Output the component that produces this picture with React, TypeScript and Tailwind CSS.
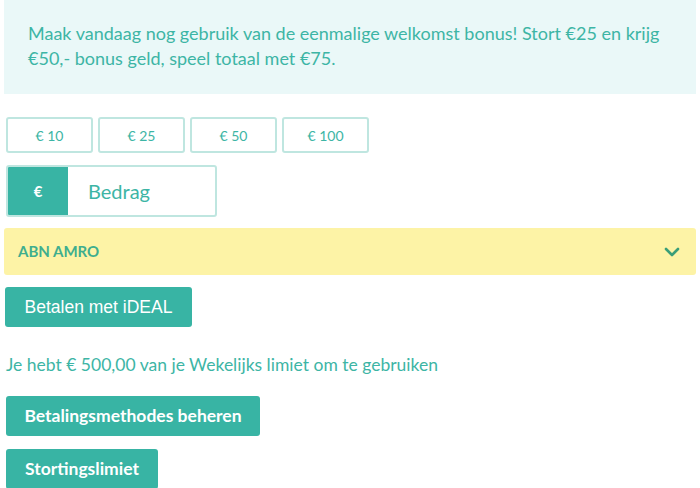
import React from 'react';

const amounts = ['€ 10', '€ 25', '€ 50', '€ 100'];

const App: React.FC = () => {
  return (
    <div className="w-[700px] h-[488px] overflow-hidden bg-white font-['Lato',sans-serif]">
      <div className="mx-1 h-[94px] bg-[#eaf8f8] pl-6 pr-4 pt-[21px] text-[18px] leading-[25px] text-[#3db5a5]">
        Maak vandaag nog gebruik van de eenmalige welkomst bonus! Stort €25 en krijg €50,- bonus geld, speel totaal met €75.
      </div>

      <div className="mt-[23px] flex gap-[5px] pl-[6px]">
        {amounts.map((amount) => (
          <button
            key={amount}
            className="flex h-9 w-[87px] items-center justify-center rounded-[3px] border-2 border-[#bfe6e0] bg-white text-[14px] text-[#3db5a5]"
          >
            {amount}
          </button>
        ))}
      </div>

      <div className="ml-[6px] mt-[12px] flex h-[52px] w-[211px] overflow-hidden rounded-[3px] border-2 border-[#bfe6e0]">
        <div className="flex w-[60px] items-center justify-center bg-[#38b4a4] text-[15px] font-bold text-white">
          €
        </div>
        <div className="flex items-center pl-5 text-[20px] text-[#3db5a5]">Bedrag</div>
      </div>

      <div className="mx-1 mt-[11px] flex h-[47px] items-center justify-between rounded-[3px] bg-[#fdf3a6] pl-[14px] pr-[16px]">
        <span className="text-[15px] font-bold text-[#3fae8e]">ABN AMRO</span>
        <svg width="16" height="10" viewBox="0 0 16 10" fill="none">
          <path d="M2 2l6 6 6-6" stroke="#3a9e78" strokeWidth="2.6" strokeLinecap="round" strokeLinejoin="round" />
        </svg>
      </div>

      <button className="ml-[5px] mt-[12px] flex h-[40px] w-[187px] items-center justify-center rounded-[3px] bg-[#38b4a4] font-['Liberation_Sans',sans-serif] text-[17.5px] text-white">
        Betalen met iDEAL
      </button>

      <div className="ml-[6px] mt-[25px] text-[17.5px] text-[#3db5a5]">
        Je hebt € 500,00 van je Wekelijks limiet om te gebruiken
      </div>

      <div className="ml-[6px] mt-[18px] flex flex-col items-start gap-[13px]">
        <button className="flex h-[40px] w-[254px] items-center justify-center rounded-[3px] bg-[#38b4a4] text-[17.5px] font-bold text-white">
          Betalingsmethodes beheren
        </button>
        <button className="flex h-[40px] w-[152px] items-center justify-center rounded-[3px] bg-[#38b4a4] text-[17.5px] font-bold text-white">
          Stortingslimiet
        </button>
      </div>
    </div>
  );
};

export default App;
